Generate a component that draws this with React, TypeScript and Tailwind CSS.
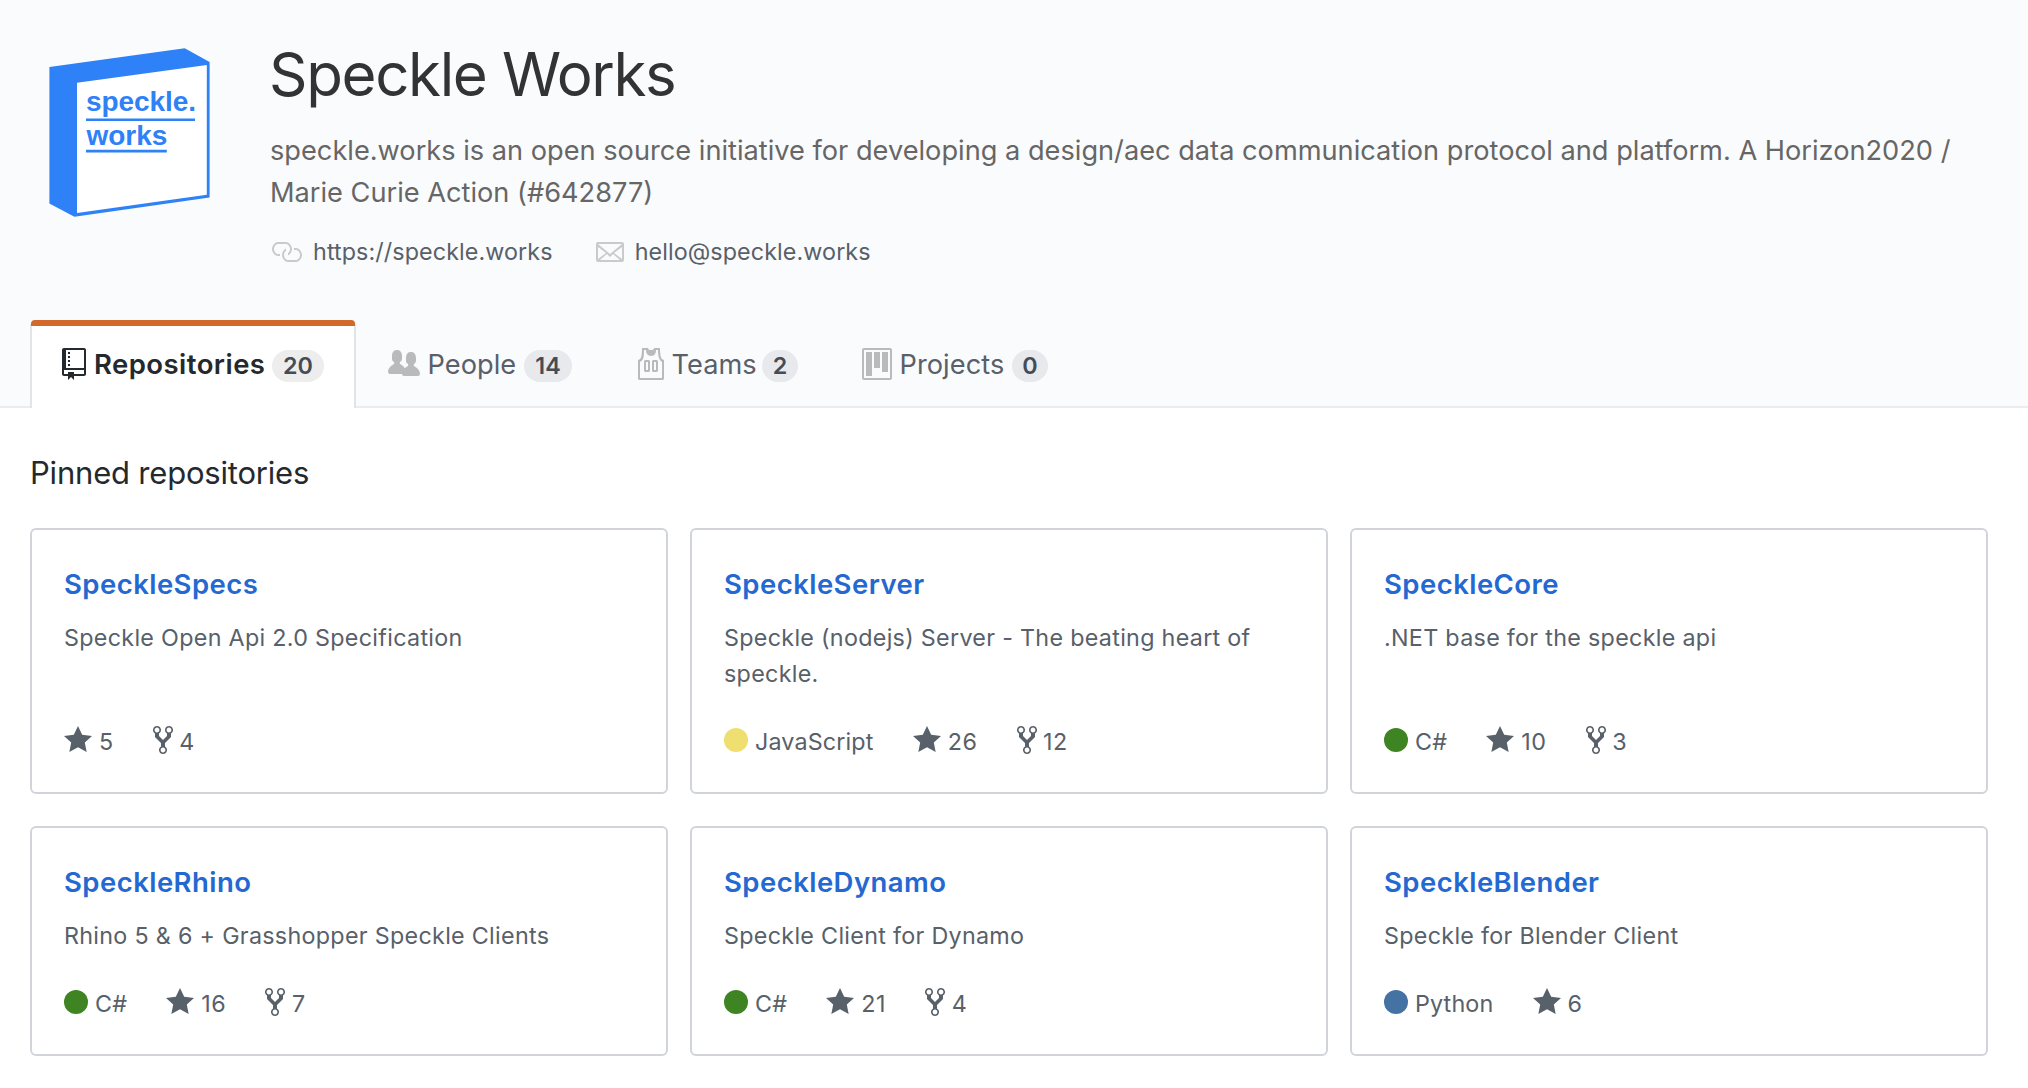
import type { ReactNode } from "react";

const icons = {
  repo: {
    w: 12,
    d: "M4 9H3V8h1v1zm0-3H3v1h1V6zm0-2H3v1h1V4zm0-2H3v1h1V2zm8-1v12c0 .55-.45 1-1 1H6v2l-1.5-1.5L3 16v-2H1c-.55 0-1-.45-1-1V1c0-.55.45-1 1-1h10c.55 0 1 .45 1 1zm-1 10H1v2h2v-1h3v1h5v-2zm0-10H2v9h9V1z",
  },
  people: {
    w: 16,
    d: "M16 12.999c0 .439-.45 1-1 1H7.995c-.539 0-.994-.447-.995-.999H1c-.54 0-1-.561-1-1 0-2.634 3-4 3-4s.229-.409 0-1c-.841-.621-1.058-.59-1-3 .058-2.419 1.367-3 2.5-3s2.442.58 2.5 3c.058 2.41-.159 2.379-1 3-.229.59 0 1 0 1s1.549.711 2.42 2.088C9.196 9.369 10 8.999 10 8.999s.229-.409 0-1c-.841-.62-1.058-.59-1-3 .058-2.419 1.367-3 2.5-3s2.437.581 2.495 3c.059 2.41-.158 2.38-1 3-.229.59 0 1 0 1s3.005 1.366 3.005 4z",
  },
  jersey: {
    w: 14,
    d: "M4.5 6l-.5.5v5l.5.5h2l.5-.5v-5L6.5 6h-2zM6 11H5V7h1v4zm6.27-7.25C12.05 2.37 11.96 1.12 12 0H9.02c0 .27-.13.48-.39.69-.25.2-.63.3-1.13.3-.5 0-.88-.09-1.13-.3-.23-.2-.36-.42-.37-.69H3c.05 1.13-.03 2.38-.25 3.75C2.55 5.13 1.95 5.88 1 6v9.5l.5.5h12l.5-.5V6c-.95-.13-1.53-.88-1.75-2.25h.02zM13 15H2V7c.89-.5 1.48-1.25 1.72-2.25S4.03 2.5 4 1h1c-.02.78.16 1.47.52 2.06.36.58 1.02.89 2 .94.98-.02 1.64-.33 2-.94.36-.59.5-1.28.48-2.06h1c.02 1.42.13 2.55.33 3.38.2.81.69 2 1.67 2.62v8zM8.5 6l-.5.5v5l.5.5h2l.5-.5v-5l-.5-.5h-2zm1.5 5H9V7h1v4z",
  },
  project: {
    w: 15,
    d: "M10 12h3V2h-3v10zm-4-2h3V2H6v8zm-4 4h3V2H2v12zm-1 1h13V1H1v14zM14 0H1a1 1 0 0 0-1 1v14a1 1 0 0 0 1 1h13a1 1 0 0 0 1-1V1a1 1 0 0 0-1-1z",
  },
  star: { w: 14, d: "M14 6l-4.9-.64L7 1 4.9 5.36 0 6l3.6 3.26L2.67 14 7 11.67 11.33 14l-.93-4.74L14 6z" },
  fork: {
    w: 10,
    d: "M8 1a1.993 1.993 0 0 0-1 3.72V6L5 8 3 6V4.72A1.993 1.993 0 0 0 2 1a1.993 1.993 0 0 0-1 3.72V6.5l3 3v1.78A1.993 1.993 0 0 0 5 15a1.993 1.993 0 0 0 1-3.72V9.5l3-3V4.72A1.993 1.993 0 0 0 8 1zM2 4.2C1.34 4.2.8 3.65.8 3c0-.65.55-1.2 1.2-1.2.65 0 1.2.55 1.2 1.2 0 .65-.55 1.2-1.2 1.2zm3 10c-.66 0-1.2-.55-1.2-1.2 0-.65.55-1.2 1.2-1.2.65 0 1.2.55 1.2 1.2 0 .65-.55 1.2-1.2 1.2zm3-10c-.66 0-1.2-.55-1.2-1.2 0-.65.55-1.2 1.2-1.2.65 0 1.2.55 1.2 1.2 0 .65-.55 1.2-1.2 1.2z",
  },
  link: {
    w: 16,
    d: "M4 9h1v1H4c-1.5 0-3-1.69-3-3.5S2.55 3 4 3h4c1.45 0 3 1.69 3 3.5 0 1.41-.91 2.72-2 3.25V8.59c.58-.45 1-1.27 1-2.09C10 5.22 8.98 4 8 4H4c-.98 0-2 1.22-2 2.5S3 9 4 9zm9-3h-1v1h1c1 0 2 1.22 2 2.5S13.98 12 13 12H9c-.98 0-2-1.22-2-2.5 0-.83.42-1.64 1-2.09V6.25c-1.09.53-2 1.84-2 3.25C6 11.31 7.55 13 9 13h4c1.45 0 3-1.69 3-3.5S14.5 6 13 6z",
  },
  mail: {
    w: 14,
    d: "M0 4v8c0 .55.45 1 1 1h12c.55 0 1-.45 1-1V4c0-.55-.45-1-1-1H1c-.55 0-1 .45-1 1zm13 0L7 9 1 4h12zM1 5.5l4 3-4 3v-6zM2 12l3.5-3L7 10.5 8.5 9l3.5 3H2zm11-.5l-4-3 4-3v6z",
  },
};

function Icon({ name, className = "" }: { name: keyof typeof icons; className?: string }) {
  const { w, d } = icons[name];
  return (
    <svg
      width={w * 2}
      height={32}
      viewBox={`0 0 ${w} 16`}
      fill="currentColor"
      fillRule="evenodd"
      className={`block shrink-0 ${className}`}
    >
      <path d={d} />
    </svg>
  );
}

function Logo() {
  return (
    <svg width="180" height="180" viewBox="40 40 180 180" className="mt-[40px] ml-[40px] block shrink-0">
      <path d="M49.4 67.1 184.7 48.3 209.6 62V197.4L74.4 216.7 49.4 203.4z" fill="#2f81f7" />
      <path d="M77 82.7 206.8 65V194.8L77 213z" fill="#fff" />
      <g fill="#2f81f7" fontFamily="'Liberation Sans', Arial, sans-serif" fontWeight="700" fontSize="28">
        <text x="86" y="111.2" textLength="110">speckle.</text>
        <text x="86.4" y="144.9">works</text>
        <path d="M86 118.4h109v2.6H86zM86 149.8h80.8v2.8H86z" />
      </g>
    </svg>
  );
}

function Contact({ icon, gap, children }: { icon: "link" | "mail"; gap: string; children: ReactNode }) {
  return (
    <a className={`flex items-start ${gap}`}>
      <Icon name={icon} className="mt-[2.5px] text-[#c9caca]" />
      <span className="text-[23.3px] leading-[36px] tracking-[0.1px] text-[#586069]">{children}</span>
    </a>
  );
}

type TabProps = {
  icon: "repo" | "people" | "jersey" | "project";
  label: string;
  count: number;
  labelWidth: string;
  badgeWidth: string;
  active?: boolean;
};

function Tab({ icon, label, count, labelWidth, badgeWidth, active }: TabProps) {
  return (
    <a
      className={
        active
          ? "relative flex h-[88px] items-start rounded-t-[6px] border-x-2 border-[#e1e4e8] bg-white px-[30px] text-[#24292e]"
          : "flex h-[88px] items-start px-[32px] text-[#586069]"
      }
    >
      {active && <span className="absolute -inset-x-[1px] top-0 h-[6px] rounded-t-[4px] bg-[#d2692b]" />}
      <Icon name={icon} className={active ? "mt-[28px]" : "mt-[28px] text-[#b8babc]"} />
      <span
        className={`leading-[42px] whitespace-nowrap ${labelWidth} ${
          active
            ? "mt-[23px] ml-[8px] text-[27.5px] font-semibold tracking-[0.45px]"
            : "mt-[24px] ml-[7.5px] text-[27.2px] tracking-[0.05px]"
        }`}
      >
        {label}
      </span>
      <span
        className={`mt-[30px] h-[32px] rounded-full bg-[#1b1f23]/8 text-center text-[23.3px] leading-[32px] font-semibold text-[#444d56] ${badgeWidth}`}
      >
        {count}
      </span>
    </a>
  );
}

type Repo = { name: string; desc: string; lang?: string; dot?: string; stars: number; forks?: number };

const repos: Repo[] = [
  { name: "SpeckleSpecs", desc: "Speckle Open Api 2.0 Specification", stars: 5, forks: 4 },
  {
    name: "SpeckleServer",
    desc: "Speckle (nodejs) Server - The beating heart of speckle.",
    lang: "JavaScript",
    dot: "bg-[#eedf70]",
    stars: 26,
    forks: 12,
  },
  { name: "SpeckleCore", desc: ".NET base for the speckle api", lang: "C#", dot: "bg-[#3f8423]", stars: 10, forks: 3 },
  {
    name: "SpeckleRhino",
    desc: "Rhino 5 & 6 + Grasshopper Speckle Clients",
    lang: "C#",
    dot: "bg-[#3f8423]",
    stars: 16,
    forks: 7,
  },
  { name: "SpeckleDynamo", desc: "Speckle Client for Dynamo", lang: "C#", dot: "bg-[#3f8423]", stars: 21, forks: 4 },
  { name: "SpeckleBlender", desc: "Speckle for Blender Client", lang: "Python", dot: "bg-[#4472a2]", stars: 6 },
];

function RepoCard({ repo }: { repo: Repo }) {
  return (
    <li className="flex flex-col rounded-[6px] border-2 border-[#d1d5da] bg-white px-[32px] pt-[33px] pb-[32.5px]">
      <a className="text-[27.5px] leading-[42px] font-semibold tracking-[0.45px] text-[#2468d1]">{repo.name}</a>
      <p className="mt-[14.5px] text-[23.3px] leading-[36px] tracking-[0.3px] text-[#586069]">{repo.desc}</p>
      <div className="mt-auto flex items-start gap-[39.2px] text-[23.3px] leading-[36px] tracking-[0.5px] text-[#586069]">
        {repo.lang && (
          <span className="flex items-start gap-[7px] tracking-[0.15px]">
            <span className={`mt-[4.5px] size-[24px] rounded-full ${repo.dot}`} />
            {repo.lang}
          </span>
        )}
        <span className="flex items-start gap-[7px]">
          <Icon name="star" className="mt-[0.5px]" />
          {repo.stars}
        </span>
        {repo.forks !== undefined && (
          <span className="flex items-start gap-[6.5px]">
            <Icon name="fork" className="mt-[0.5px]" />
            {repo.forks}
          </span>
        )}
      </div>
    </li>
  );
}

export default function App() {
  return (
    <div className="min-h-screen bg-white font-[Inter,sans-serif]">
      <header className="flex h-[408px] flex-col border-b-2 border-[#eaecef] bg-[#fafbfd]">
        <div className="flex items-start">
          <Logo />
          <div className="ml-[50px] w-[1700px] pt-[39px]">
            <h1 className="-ml-[1px] text-[60px] leading-[70px] tracking-[-1.35px] text-[#333]">Speckle Works</h1>
            <p className="mt-[20.5px] text-[27.2px] leading-[42px] text-[#666]">
              speckle.works is an open source initiative for developing a design/aec data communication protocol and
              platform. A Horizon2020 / Marie Curie Action (#642877)
            </p>
            <div className="mt-[20px] flex gap-[43px]">
              <Contact icon="link" gap="gap-[11px]">https://speckle.works</Contact>
              <Contact icon="mail" gap="gap-[11px]">hello@speckle.works</Contact>
            </div>
          </div>
        </div>
        <nav className="mt-auto -mb-[2px] ml-[30px] flex">
          <Tab icon="repo" label="Repositories" count={20} labelWidth="w-[178px]" badgeWidth="w-[52px]" active />
          <Tab icon="people" label="People" count={14} labelWidth="w-[96.5px]" badgeWidth="w-[48px]" />
          <Tab icon="jersey" label="Teams" count={2} labelWidth="w-[90.5px]" badgeWidth="w-[36px]" />
          <Tab icon="project" label="Projects" count={0} labelWidth="w-[112.5px]" badgeWidth="w-[36px]" />
        </nav>
      </header>
      <main className="px-[30px] pt-[40.5px]">
        <h2 className="text-[31px] leading-[48px] tracking-[-0.2px] text-[#24292e]">Pinned repositories</h2>
        <ol className="mt-[31.5px] grid grid-cols-[638px_638px_638px] grid-rows-[266px_230px] gap-x-[22px] gap-y-[32px]">
          {repos.map((repo) => (
            <RepoCard key={repo.name} repo={repo} />
          ))}
        </ol>
      </main>
    </div>
  );
}
